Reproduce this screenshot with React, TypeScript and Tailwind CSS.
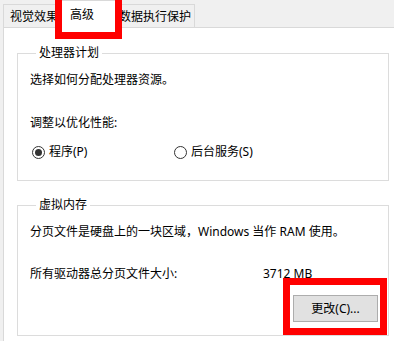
import React from 'react';

const font = { fontFamily: '"Noto Sans", "Noto Sans CJK SC", sans-serif' };

const Radio: React.FC<{ checked?: boolean; label: string; className?: string }> = ({ checked, label, className }) => (
  <div className={`flex items-center gap-[4px] ${className ?? ''}`}>
    <span className="flex h-[13px] w-[13px] items-center justify-center rounded-full border border-[#333333] bg-white">
      {checked && <span className="h-[7px] w-[7px] rounded-full bg-[#333333]" />}
    </span>
    <span className="leading-[16px]">{label}</span>
  </div>
);

export default function App() {
  return (
    <div className="relative flex h-[341px] w-[394px] flex-col overflow-hidden bg-[#f0f0f0] text-[12px] text-black" style={font}>
      {/* 选项卡 */}
      <div className="flex h-[27px] shrink-0 items-end pl-[3px]">
        <div className="flex h-[23px] w-[57px] items-center border-l border-r border-t border-[#d9d9d9] bg-[#f0f0f0] pl-[6px] pt-[2px] leading-[16px]">
          视觉效果
        </div>
        <div className="relative z-10 -mb-px h-[28px] w-[56px] border-l border-r border-t border-[#d9d9d9] bg-white pl-[9px] pt-[6px] leading-[16px]">
          高级
        </div>
        <div className="flex h-[23px] w-[79px] items-center border-r border-t border-[#d9d9d9] bg-[#f0f0f0] pl-[3px] pt-[2px] leading-[16px]">
          数据执行保护
        </div>
      </div>

      {/* 面板 */}
      <div className="ml-[3px] flex-1 border-l border-t border-[#d9d9d9] bg-white pl-[13px] pt-[18px]">
        <fieldset className="w-[372px] border border-[#dcdcdc] pb-[20px] pl-[12px]">
          <legend className="ml-[6px] px-[3px] leading-[14px]">处理器计划</legend>
          <div className="mt-[12px] leading-[16px]">选择如何分配处理器资源。</div>
          <div className="mt-[27px] leading-[16px]">调整以优化性能:</div>
          <div className="mt-[13px] flex items-center pl-[2px]">
            <Radio checked label="程序(P)" className="w-[142px]" />
            <Radio label="后台服务(S)" />
          </div>
        </fieldset>

        <fieldset className="mt-[17px] w-[372px] border border-[#dcdcdc] pb-[13px] pl-[12px] pr-[10px]">
          <legend className="ml-[6px] px-[3px] leading-[14px]">虚拟内存</legend>
          <div className="mt-[12px] leading-[16px]">分页文件是硬盘上的一块区域，Windows 当作 RAM 使用。</div>
          <div className="mt-[26px] flex leading-[16px]">
            <span className="w-[233px]">所有驱动器总分页文件大小:</span>
            <span>3712 MB</span>
          </div>
          <div className="mt-[13px] flex justify-end">
            <button className="flex h-[27px] w-[85px] items-center justify-center border border-[#adadad] bg-[#e1e1e1] leading-[16px]">
              更改(C)...
            </button>
          </div>
        </fieldset>
      </div>

      {/* 红色标注框 */}
      <div className="pointer-events-none absolute left-[55px] top-[-7px] z-20 h-[46px] w-[67px] border-[7px] border-[#ff0000]" />
      <div className="pointer-events-none absolute left-[283px] top-[278px] z-20 h-[57px] w-[104px] border-[7px] border-[#ff0000]" />
    </div>
  );
}
